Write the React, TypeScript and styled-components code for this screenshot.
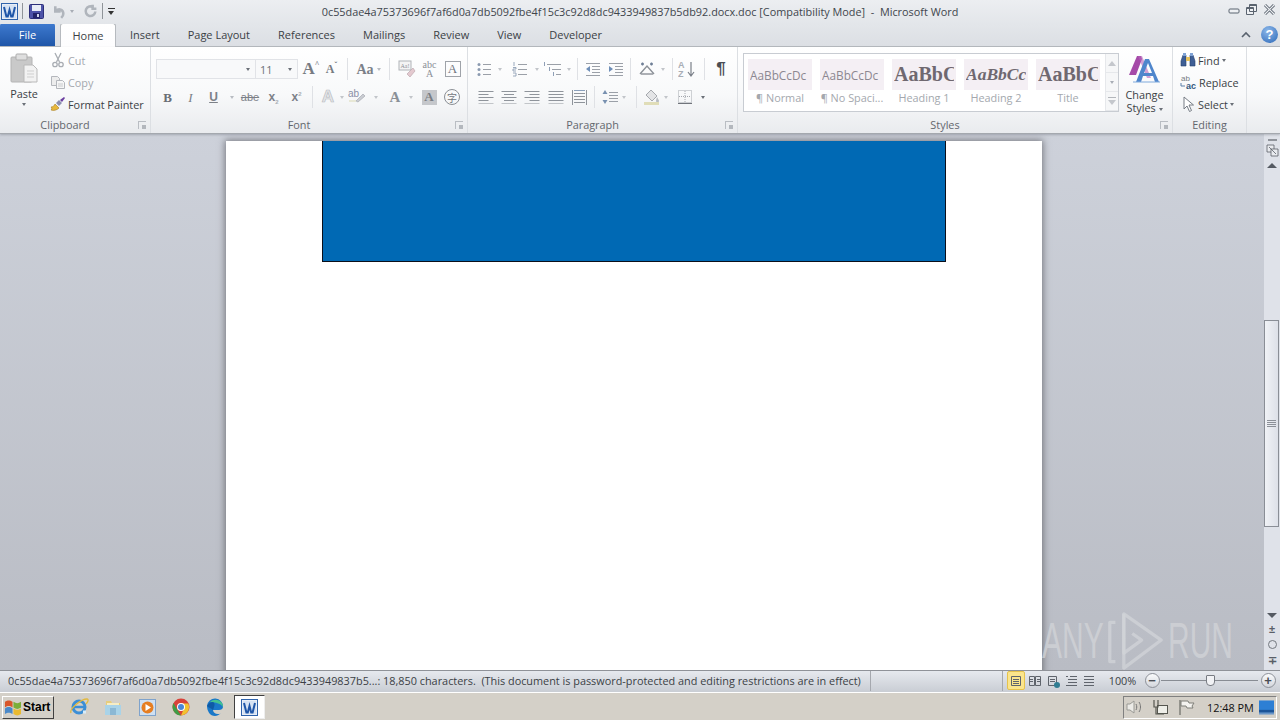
import React from "react";
import styled, { createGlobalStyle } from "styled-components";

const GlobalStyle = createGlobalStyle`
  html, body { margin: 0; padding: 0; height: 100%; overflow: hidden; }
  body { font-family: "Open Sans", "Liberation Sans", sans-serif; font-size: 10.87px; color: #3b3b3b; }
  * { box-sizing: border-box; }
`;

const FILE_NAME = "0c55dae4a75373696f7af6d0a7db5092fbe4f15c3c92d8dc9433949837b5db92.docx.doc";

export default function App() {
  return (
    <Screen>
      <GlobalStyle />
      <TitleBar>
        <QuickAccess>
          <WordIcon size={17} />
          <QatSep />
          <SaveIcon />
          <UndoIcon />
          <QatCaret $c="#a8adb5" />
          <RedoIcon />
          <QatSep />
          <QatMore />
        </QuickAccess>
        <TitleText>{FILE_NAME} [Compatibility Mode]&nbsp; -&nbsp; Microsoft Word</TitleText>
        <WindowButtons>
          <svg width="12" height="12" viewBox="0 0 12 12"><rect x="1" y="5" width="10" height="4" rx="1" fill="#eef0f3" stroke="#5b6470" /></svg>
          <svg width="13" height="13" viewBox="0 0 13 13"><path d="M4.5 1.5h7v7h-7zM1.5 4.5h7v7h-7z" fill="#eef0f3" stroke="#5b6470" /><path d="M1.5 5.5h7M4.5 2.5h7" stroke="#5b6470" /></svg>
          <svg width="13" height="13" viewBox="0 0 13 13"><path d="M2 2l9 9M11 2l-9 9" stroke="#5b6470" strokeWidth="3" /><path d="M2 2l9 9M11 2l-9 9" stroke="#eef0f3" strokeWidth="1.2" /></svg>
        </WindowButtons>
      </TitleBar>

      <TabRow>
        <FileTab>File</FileTab>
        <HomeTab>Home</HomeTab>
        {["Insert", "Page Layout", "References", "Mailings", "Review", "View", "Developer"].map((t) => (
          <Tab key={t}>{t}</Tab>
        ))}
        <TabEnd>
          <svg width="12" height="10" viewBox="0 0 12 10"><path d="M2 7l4-4 4 4" fill="none" stroke="#59626e" strokeWidth="1.6" /></svg>
          <HelpBall>?</HelpBall>
        </TabEnd>
      </TabRow>

      <Ribbon>
        <Group $w={151}>
          <ClipboardBody>
            <BigButton $w={36}>
              <PasteIcon />
              <BigLabel>Paste</BigLabel>
              <MiniCaret />
            </BigButton>
            <SmallCol>
              <SmallRow $off><CutIcon />Cut</SmallRow>
              <SmallRow $off><CopyIcon />Copy</SmallRow>
              <SmallRow><BrushIcon />Format Painter</SmallRow>
            </SmallCol>
          </ClipboardBody>
          <GroupFooter $launcher>Clipboard<Launcher /></GroupFooter>
        </Group>

        <Group $w={317}>
          <ToolBody $left={5}>
            <ToolRow>
              <Combo $w={100}><MiniCaret /></Combo>
              <Combo $w={43}>11<MiniCaret /></Combo>
              <Tool $w={3} />
              <Tool $w={20}><GrowGlyph $size={17}>A<sup>^</sup></GrowGlyph></Tool>
              <Tool $w={21}><GrowGlyph $size={12}>A<sup>ˇ</sup></GrowGlyph></Tool>
              <Divider $l={5} $r={5} />
              <Tool $w={31}><SerifGlyph $size={14} $c="#7b8088" $bold>Aa</SerifGlyph><MiniCaret $c="#b8bcc2" /></Tool>
              <Divider $l={5} $r={5} />
              <Tool $w={23}><ClearIcon /></Tool>
              <Tool $w={23}><SerifGlyph $size={10} $c="#8b9097">abc<br />A</SerifGlyph></Tool>
              <Tool $w={23}><BoxGlyph>A</BoxGlyph></Tool>
            </ToolRow>
            <ToolRow>
              <Tool $w={23}><SerifGlyph $size={13} $c="#6a6e75" $bold>B</SerifGlyph></Tool>
              <Tool $w={23}><SerifGlyph $size={13} $c="#7a7f86" $italic>I</SerifGlyph></Tool>
              <Tool $w={23}><UnderGlyph>U</UnderGlyph></Tool>
              <Tool $w={13}><MiniCaret $c="#b8bcc2" /></Tool>
              <Tool $w={24}><StrikeGlyph>abe</StrikeGlyph></Tool>
              <Tool $w={23}><ScriptGlyph>x<sub>2</sub></ScriptGlyph></Tool>
              <Tool $w={23}><ScriptGlyph>x<sup>2</sup></ScriptGlyph></Tool>
              <Divider $l={4} $r={4} />
              <Tool $w={22}><EffectGlyph>A</EffectGlyph></Tool>
              <Tool $w={6}><MiniCaret $c="#c2c5ca" /></Tool>
              <Tool $w={24}><HighlightIcon /></Tool>
              <Tool $w={14}><MiniCaret $c="#c2c5ca" /></Tool>
              <Tool $w={24}><SerifGlyph $size={15} $c="#8b9097" $bold>A</SerifGlyph></Tool>
              <Tool $w={7}><MiniCaret $c="#c2c5ca" /></Tool>
              <Tool $w={30}><ShadeGlyph>A</ShadeGlyph></Tool>
              <Tool $w={16}><RingGlyph>字</RingGlyph></Tool>
            </ToolRow>
          </ToolBody>
          <GroupFooter $launcher>Font<Launcher /></GroupFooter>
        </Group>

        <Group $w={270}>
          <ToolBody $left={7}>
            <ToolRow>
              <Tool $w={18}><BulletIcon /></Tool>
              <Tool $w={14}><MiniCaret $c="#c2c5ca" /></Tool>
              <Tool $w={26}><NumberIcon /></Tool>
              <Tool $w={8}><MiniCaret $c="#c2c5ca" /></Tool>
              <Tool $w={24}><MultiIcon /></Tool>
              <Tool $w={8}><MiniCaret $c="#c2c5ca" /></Tool>
              <Divider $l={4} $r={4} />
              <Tool $w={22}><IndentIcon $flip /></Tool>
              <Tool $w={24}><IndentIcon /></Tool>
              <Divider $l={2} $r={3} />
              <Tool $w={26}><DirectionIcon /></Tool>
              <Tool $w={6}><MiniCaret $c="#c2c5ca" /></Tool>
              <Divider $l={6} $r={3} />
              <Tool $w={22}><SortIcon /></Tool>
              <Divider $l={6} $r={5} />
              <Tool $w={22}><PilcrowGlyph>¶</PilcrowGlyph></Tool>
            </ToolRow>
            <ToolRow>
              <Tool $w={22}><AlignIcon mode="left" /></Tool>
              <Tool $w={23}><AlignIcon mode="center" /></Tool>
              <Tool $w={24}><AlignIcon mode="right" /></Tool>
              <Tool $w={24}><AlignIcon mode="full" /></Tool>
              <Tool $w={23}><DistributeIcon /></Tool>
              <Divider $l={3} $r={4} />
              <Tool $w={22}><SpacingIcon /></Tool>
              <Tool $w={6}><MiniCaret $c="#c2c5ca" /></Tool>
              <Divider $l={9} $r={5} />
              <Tool $w={20}><BucketIcon /></Tool>
              <Tool $w={8}><MiniCaret $c="#c2c5ca" /></Tool>
              <Tool $w={30}><BorderIcon /></Tool>
              <Tool $w={6}><MiniCaret /></Tool>
            </ToolRow>
          </ToolBody>
          <GroupFooter $launcher>Paragraph<Launcher /></GroupFooter>
        </Group>

        <Group $w={435}>
          <StylesBody>
            <Gallery>
              <StyleItem><StylePreview><PreviewText>AaBbCcDc</PreviewText></StylePreview><StyleName>¶ Normal</StyleName></StyleItem>
              <StyleItem><StylePreview><PreviewText>AaBbCcDc</PreviewText></StylePreview><StyleName>¶ No Spaci...</StyleName></StyleItem>
              <StyleItem><StylePreview><PreviewText $heading>AaBbC</PreviewText></StylePreview><StyleName>Heading 1</StyleName></StyleItem>
              <StyleItem><StylePreview><PreviewText $heading $italic>AaBbCc</PreviewText></StylePreview><StyleName>Heading 2</StyleName></StyleItem>
              <StyleItem><StylePreview><PreviewText $heading>AaBbC</PreviewText></StylePreview><StyleName>Title</StyleName></StyleItem>
              <GalleryScroll>
                <GalleryCell><ArrowUp /></GalleryCell>
                <GalleryCell><MiniCaret $c="#a8adb5" /></GalleryCell>
                <GalleryCell><GalleryMore /></GalleryCell>
              </GalleryScroll>
            </Gallery>
            <ChangeStyles>
              <ChangeStylesIcon />
              <BigLabel>Change<br />Styles <MiniCaret /></BigLabel>
            </ChangeStyles>
          </StylesBody>
          <GroupFooter $launcher>Styles<Launcher /></GroupFooter>
        </Group>

        <Group $w={74}>
          <EditingBody>
            <SmallRow><FindIcon />Find <MiniCaret /></SmallRow>
            <SmallRow><ReplaceIcon />Replace</SmallRow>
            <SmallRow><SelectIcon />Select <MiniCaret /></SmallRow>
          </EditingBody>
          <GroupFooter>Editing</GroupFooter>
        </Group>
      </Ribbon>

      <Workspace>
        <DocArea>
          <Page>
            <BlueBox />
          </Page>
        </DocArea>
        <ScrollBar>
          <ScrollTop>
            <RulerDash />
            <RulerIcon />
            <ScrollArrow $up />
          </ScrollTop>
          <ScrollTrack>
            <Thumb><Grip /><Grip /><Grip /><Grip /></Thumb>
          </ScrollTrack>
          <ScrollBottom>
            <ScrollArrow />
            <NavGlyph>±</NavGlyph>
            <NavCircle />
            <NavGlyph>∓</NavGlyph>
          </ScrollBottom>
        </ScrollBar>
        <Watermark>
          <WaterWord>ANY</WaterWord>
          <svg width="58" height="60" viewBox="0 0 62 64">
            <g fill="none" stroke="#d2d4d8" strokeOpacity=".75" strokeWidth="3.5" strokeLinejoin="round">
              <path d="M9 12H3v42h6" />
              <path d="M18 3l40 28-40 30z" />
              <path d="M18 3v42l19-14-10-7" />
            </g>
          </svg>
          <WaterWord>RUN</WaterWord>
        </Watermark>
      </Workspace>

      <StatusBar>
        <StatusText>0c55dae4a75373696f7af6d0a7db5092fbe4f15c3c92d8dc9433949837b5...: 18,850 characters.&nbsp; (This document is password-protected and editing restrictions are in effect)</StatusText>
        <StatusSep $l={9} />
        <StatusFill />
        <StatusSep $l={0} />
        <ViewButton $active><ViewIcon d="M3.500 3.500h9v9h-9z M5 6.500h6 M5 8.500h6 M5 10.500h6" /></ViewButton>
        <ViewButton><ViewIcon d="M2.500 3.500h5v9h-5z M8.500 3.500h5v9h-5z M3 6.500h3 M3 8.500h3 M10 6.500h3 M10 8.500h3" /></ViewButton>
        <ViewButton><ViewIcon d="M3.500 3.500h8v9h-8z M5 6.500h5 M5 8.500h5" dot /></ViewButton>
        <ViewButton><ViewIcon d="M3 3.500h2 M7 3.500h7 M5 6.500h9 M5 9.500h9 M3 12.500h11" /></ViewButton>
        <ViewButton><ViewIcon d="M3 3.500h10 M3 6.500h10 M3 9.500h10 M3 12.500h10" /></ViewButton>
        <ZoomText>100%</ZoomText>
        <ZoomButton>−</ZoomButton>
        <ZoomTrack><ZoomThumb /></ZoomTrack>
        <ZoomButton>+</ZoomButton>
      </StatusBar>

      <Taskbar>
        <StartButton><FlagIcon />Start</StartButton>
        <TaskIcons>
          <TaskSlot><IeIcon /></TaskSlot>
          <TaskSlot><FolderIcon /></TaskSlot>
          <TaskSlot><PlayerIcon /></TaskSlot>
          <TaskSlot><ChromeIcon /></TaskSlot>
          <TaskSlot><EdgeIcon /></TaskSlot>
          <TaskActive><WordIcon size={17} /></TaskActive>
        </TaskIcons>
        <Tray>
          <SpeakerIcon />
          <NetworkIcon />
          <TrayFlagIcon />
          <Clock>12:48 PM</Clock>
          <DesktopIcon />
        </Tray>
      </Taskbar>
    </Screen>
  );
}

/* ---------- icons ---------- */

function WordIcon({ size }: { size: number }) {
  return (
    <svg width={size} height={size} viewBox="0 0 17 17">
      <rect x=".5" y=".5" width="16" height="16" fill="#e8eef7" stroke="#2f63ab" />
      <rect x="2" y="2" width="13" height="13" fill="#d5e2f3" />
      <path d="M3 4l2.400 9.500h1.400L8.500 7l1.700 6.500h1.400L14 4" fill="none" stroke="#1f56a8" strokeWidth="2" />
    </svg>
  );
}
function SaveIcon() {
  return (
    <svg width="15" height="15" viewBox="0 0 15 15" style={{ marginRight: 7 }}>
      <rect x=".5" y=".5" width="14" height="14" rx="1" fill="#4d53a8" stroke="#2c2f7a" />
      <rect x="3" y="1" width="9" height="6" fill="#e8ecf6" />
      <rect x="4" y="9" width="7" height="5" fill="#23256a" />
      <rect x="8" y="10" width="2" height="3" fill="#cfd4ea" />
    </svg>
  );
}
function UndoIcon() {
  return (
    <svg width="15" height="15" viewBox="0 0 14 14"><path d="M4 2v5h5M4.500 6.500c3-3 7-1 7 2.500 0 2-1 3-2 4" fill="none" stroke="#b0b5bc" strokeWidth="2.400" /></svg>
  );
}
function RedoIcon() {
  return (
    <svg width="15" height="15" viewBox="0 0 14 14"><path d="M11.500 7a4.500 4.500 0 1 1-2-4M9 .8v3.600h3.500" fill="none" stroke="#b0b5bc" strokeWidth="2.400" /></svg>
  );
}
function PasteIcon() {
  return (
    <svg width="28" height="30" viewBox="0 0 28 30">
      <rect x="1" y="4" width="21" height="25" rx="1" fill="#c9c9c9" stroke="#b4b4b4" />
      <rect x="6" y="1" width="11" height="6" rx="1" fill="#dedede" stroke="#adadad" />
      <path d="M14 12h9l4 4v13H14z" fill="#f2f2f2" stroke="#b9b9b9" />
      <path d="M17 18h7M17 21h7M17 24h7" stroke="#cfcfcf" />
    </svg>
  );
}
function CutIcon() {
  return (
    <svg width="16" height="16" viewBox="0 0 16 16" fill="none" stroke="#a9adb3" strokeWidth="1.300">
      <path d="M5 1l4.500 9M11 1L6.500 10" />
      <circle cx="5" cy="12.500" r="2.200" /><circle cx="11" cy="12.500" r="2.200" />
    </svg>
  );
}
function CopyIcon() {
  return (
    <svg width="16" height="16" viewBox="0 0 16 16" fill="#ededed" stroke="#b4b7bc">
      <path d="M1.500 2.500h6l2 2v7h-8z" /><path d="M6.500 6.500h6l2 2v6h-8z" fill="#f6f6f6" />
      <path d="M8 10h5M8 12h5" stroke="#c8cacd" />
    </svg>
  );
}
function BrushIcon() {
  return (
    <svg width="16" height="16" viewBox="0 0 16 16">
      <path d="M1 11c2 0 3-1 4-3l4 4c-2 2-5 3-8 2 1-1 1-2 0-3z" fill="#e8b83c" stroke="#a57b1c" strokeWidth=".6" />
      <path d="M6 7l3-3 3 3-3 3z" fill="#8b8fb0" />
      <path d="M10 4l4-3 1 1-3 4z" fill="#6b3fa0" />
    </svg>
  );
}
function ClearIcon() {
  return (
    <svg width="18" height="18" viewBox="0 0 18 18">
      <rect x="1" y="1" width="12" height="9" fill="#f4f4f4" stroke="#b0b3b8" />
      <text x="2.500" y="8" fontSize="6" fontFamily="Liberation Serif" fill="#8b8f95">Aa!</text>
      <path d="M9 14l6-6 2 3-5 6z" fill="#e4c9cf" stroke="#b6a0a6" strokeWidth=".6" />
    </svg>
  );
}
function HighlightIcon() {
  return (
    <svg width="18" height="18" viewBox="0 0 18 18">
      <text x="0" y="9" fontSize="10" fontFamily="Liberation Sans" fill="#8a8fa6">ab</text>
      <path d="M8 13l7-7 2 2-7 6z" fill="#c9ccd2" stroke="#a8abb2" strokeWidth=".7" />
      <path d="M1 12h7v2H1z" fill="#e8e8d6" />
    </svg>
  );
}
function BulletIcon() {
  return (
    <svg width="16" height="16" viewBox="0 0 16 16">
      <path d="M7 3.500h8M7 8.500h8M7 13.500h8" stroke="#9ba0a8" />
      <circle cx="3" cy="3.500" r="1.500" fill="#8b9ab0" /><circle cx="3" cy="8.500" r="1.500" fill="#8b9ab0" /><circle cx="3" cy="13.500" r="1.500" fill="#8b9ab0" />
    </svg>
  );
}
function NumberIcon() {
  return (
    <svg width="16" height="16" viewBox="0 0 16 16">
      <path d="M6 3.500h9M6 8.500h9M6 13.500h9" stroke="#9ba0a8" />
      <path d="M2 1v4M1 6.500h3v1.500H1v2h3M1 12h3v3H1" fill="none" stroke="#8f9fb6" strokeWidth=".9" />
    </svg>
  );
}
function MultiIcon() {
  return (
    <svg width="20" height="16" viewBox="0 0 20 16">
      <path d="M4 3.500h14M9 8.500h9M13 13.500h5" stroke="#9ba0a8" />
      <path d="M1.500 1v4M6.500 6v4M10.500 11v4" stroke="#8f9fb6" />
    </svg>
  );
}
function IndentIcon({ $flip }: { $flip?: boolean }) {
  return (
    <svg width="16" height="16" viewBox="0 0 16 16">
      <path d="M1 2.500h14M7 5.500h8M7 8.500h8M7 11.500h8M1 14.500h14" stroke="#9ba0a8" />
      <path d={$flip ? "M5 5L1 8l4 3z" : "M1 5l4 3-4 3z"} fill="#6f8fb8" />
    </svg>
  );
}
function DirectionIcon() {
  return (
    <svg width="18" height="16" viewBox="0 0 18 16" fill="none" stroke="#8b9097" strokeWidth="1.400">
      <path d="M2 13L9 5l7 8" /><path d="M3 13h12" />
      <path d="M3 3h3M4.500 1.500v3M12 3h3M13.500 1.500v3" stroke="#6f7f96" />
    </svg>
  );
}
function SortIcon() {
  return (
    <svg width="18" height="18" viewBox="0 0 18 18">
      <text x="0" y="8" fontSize="9" fontFamily="Liberation Sans" fill="#a8adb5" fontWeight="700">A</text>
      <text x="0" y="17" fontSize="9" fontFamily="Liberation Sans" fill="#a8adb5" fontWeight="700">Z</text>
      <path d="M13 2v13M10 12l3 4 3-4" fill="none" stroke="#7b8089" strokeWidth="1.200" />
    </svg>
  );
}
function AlignIcon({ mode }: { mode: "left" | "center" | "right" | "full" }) {
  const short = mode === "full" ? 15 : 10;
  const x = mode === "left" || mode === "full" ? 0.5 : mode === "right" ? 5.5 : 3;
  return (
    <svg width="16" height="14" viewBox="0 0 16 14" stroke="#8f949b">
      <path d="M.5 1.500h15" /><path d={`M${x} 4.500h${short}`} /><path d="M.5 7.500h15" /><path d={`M${x} 10.500h${short}`} />
      <path d="M.5 13.500h15" strokeOpacity=".5" />
    </svg>
  );
}
function DistributeIcon() {
  return (
    <svg width="17" height="17" viewBox="0 0 17 17" fill="none" stroke="#8f949b">
      <path d="M1.500 1v15M15.500 1v15M3 4.500h11M3 7.500h11M3 10.500h11M3 13.500h11" />
      <path d="M3 1.500h11" stroke="#8aa0bc" />
    </svg>
  );
}
function SpacingIcon() {
  return (
    <svg width="16" height="16" viewBox="0 0 16 16">
      <path d="M7 3.500h9M7 6.500h9M7 9.500h9M7 12.500h9" stroke="#9ba0a8" />
      <path d="M3 1L.5 5h5zM3 15L.5 11h5z" fill="#7890b0" />
    </svg>
  );
}
function BucketIcon() {
  return (
    <svg width="18" height="18" viewBox="0 0 18 18">
      <path d="M8 2l6 6-5 5-6-6z" fill="#e3e4e6" stroke="#a6a9ae" />
      <path d="M14 9c1 2 2 3 2 4a1.500 1.500 0 0 1-3 0c0-1 .5-2 1-4z" fill="#b8bcc2" />
      <rect x="1" y="14" width="15" height="3" fill="#e0ddb8" />
    </svg>
  );
}
function BorderIcon() {
  return (
    <svg width="14" height="14" viewBox="0 0 14 14" fill="none" stroke="#a4a8ae" strokeDasharray="1 1">
      <rect x=".5" y=".5" width="13" height="12" /><path d="M7 1v11M1 6.500h12" />
      <path d="M0 13.500h14" stroke="#70747b" strokeDasharray="none" />
    </svg>
  );
}
function ArrowUp() {
  return <svg width="8" height="5" viewBox="0 0 8 5"><path d="M4 0L0 5h8z" fill="#c4c7cc" /></svg>;
}
function GalleryMore() {
  return <svg width="8" height="8" viewBox="0 0 8 8"><path d="M0 0h8v1H0z" fill="#b3b6bb" /><path d="M0 3h8L4 8z" fill="#c4c7cc" /></svg>;
}
function ChangeStylesIcon() {
  return (
    <svg width="32" height="28" viewBox="0 0 32 28">
      <path d="M0 20L8 1h4l1 3-6 16z" fill="#a54aa8" />
      <path d="M9 1h4l9 22h-4z" fill="#b565ba" opacity=".6" />
      <path d="M7 27L16 4h4l10 23h-4l-2-6H14l-2 6z M15 18h8l-4-10z" fill="#4f86cc" fillRule="evenodd" />
      <path d="M4 27h27" stroke="#7fa9dc" />
    </svg>
  );
}
function FindIcon() {
  return (
    <svg width="16" height="16" viewBox="0 0 16 16">
      <path d="M1 9l2-6h3v11H1zM15 9l-2-6h-3v11h5z" fill="#3f5f95" stroke="#27406d" strokeWidth=".6" />
      <rect x="6" y="5" width="4" height="4" fill="#e7c25d" />
      <rect x="3" y="1" width="3" height="3" fill="#7ea1d4" /><rect x="10" y="1" width="3" height="3" fill="#7ea1d4" />
    </svg>
  );
}
function ReplaceIcon() {
  return (
    <svg width="17" height="16" viewBox="0 0 17 16">
      <text x="1" y="7" fontSize="8" fontFamily="Liberation Sans" fill="#777b82">ab</text>
      <text x="6" y="15" fontSize="9" fontWeight="700" fontFamily="Liberation Sans" fill="#33597f">ac</text>
      <path d="M1 9v3h4" fill="none" stroke="#5a7fa8" />
    </svg>
  );
}
function SelectIcon() {
  return (
    <svg width="16" height="17" viewBox="0 0 16 17">
      <path d="M4 1v12l3-3 2.500 5.500 2-1L9 9h4.500z" fill="#fff" stroke="#767c85" />
    </svg>
  );
}
function RulerIcon() {
  return (
    <svg width="13" height="13" viewBox="0 0 13 13" fill="#e9ebef" stroke="#5a5f68" strokeWidth=".8">
      <path d="M1 1h7v7H1z" /><path d="M5 5h7v7H5z" /><path d="M3 3l7 7" />
    </svg>
  );
}
function ViewIcon({ d, dot }: { d: string; dot?: boolean }) {
  return (
    <svg width="16" height="16" viewBox="0 0 16 16">
      <path d={d} fill="none" stroke="#5f646c" />
      {dot && <circle cx="12" cy="12" r="3" fill="#2f7c92" />}
    </svg>
  );
}
function FlagIcon() {
  return (
    <svg width="18" height="17" viewBox="0 0 19 18">
      <path d="M1 3c3-2 5-2 8 0v6c-3-2-5-2-8 0z" fill="#d8562a" />
      <path d="M10 3c3 2 5 2 8 0v6c-3 2-5 2-8 0z" fill="#7bae3a" />
      <path d="M1 10c3-2 5-2 8 0v6c-3-2-5-2-8 0z" fill="#4a89c9" />
      <path d="M10 10c3 2 5 2 8 0v6c-3 2-5 2-8 0z" fill="#e9b92f" />
    </svg>
  );
}
function IeIcon() {
  return (
    <svg width="20" height="20" viewBox="0 0 20 20">
      <circle cx="10" cy="10" r="6" fill="none" stroke="#3c8fd6" strokeWidth="3" />
      <path d="M4 10h12" stroke="#3c8fd6" strokeWidth="2.500" />
      <path d="M14 15h3" stroke="#d8ecf8" strokeWidth="3" />
      <path d="M2 16C0 12 12 2 18 2c2 0 1 3-1 5" fill="none" stroke="#e2b93f" strokeWidth="1.300" />
    </svg>
  );
}
function FolderIcon() {
  return (
    <svg width="18" height="18" viewBox="0 0 18 18">
      <path d="M2 3h5l1 2h8v11H2z" fill="#e7cd7b" />
      <path d="M1 7h16v10H1z" fill="#a9d3e8" />
      <rect x="6" y="10" width="6" height="7" fill="#8bb8d4" />
      <path d="M3 5h12v2H3z" fill="#f7edc4" />
    </svg>
  );
}
function PlayerIcon() {
  return (
    <svg width="17" height="17" viewBox="0 0 17 17">
      <rect x=".5" y=".5" width="16" height="16" fill="#cfe0f2" stroke="#7fa3cc" />
      <circle cx="8.500" cy="8.500" r="6" fill="#e67e22" />
      <path d="M6.500 5l5.500 3.500L6.500 12z" fill="#fff" />
    </svg>
  );
}
function ChromeIcon() {
  return (
    <svg width="18" height="18" viewBox="0 0 18 18">
      <circle cx="9" cy="9" r="8.500" fill="#d8423a" />
      <path d="M1.500 5L6 13l3 4.500A8.500 8.500 0 0 1 1.500 5z" fill="#3f9c46" />
      <path d="M9 5.500h7.300A8.500 8.500 0 0 1 9 17.500l3-7z" fill="#f2c230" />
      <circle cx="9" cy="9" r="4" fill="#fff" /><circle cx="9" cy="9" r="3" fill="#4a86d8" />
    </svg>
  );
}
function EdgeIcon() {
  return (
    <svg width="18" height="18" viewBox="0 0 18 18">
      <path d="M1 8a8 8 0 0 1 16 1c0 2-2 3-4 3H7c0 2 2 4 5 4 1 0 2 0 3-1-2 2-4 3-6 3C4 18 1 13 1 8z" fill="#1a78c8" />
      <path d="M4 4c3-3 9-3 12 1 1 2 1 4 1 4-2-4-10-5-13-5z" fill="#43c28f" />
      <path d="M1 8c1-3 4-4 6-4 2 1 2 3 0 8-2-2-4-2-6-4z" fill="#0f5aa5" />
    </svg>
  );
}
function SpeakerIcon() {
  return (
    <svg width="18" height="16" viewBox="0 0 18 16" fill="none" stroke="#9a9a95" style={{ marginRight: 8 }}>
      <path d="M1 5h3l4-3v12l-4-3H1z" fill="#ecebe7" />
      <path d="M10 5c1 2 1 4 0 6M13 3c2 3 2 7 0 10" stroke="#777" />
    </svg>
  );
}
function NetworkIcon() {
  return (
    <svg width="17" height="17" viewBox="0 0 17 17" style={{ marginRight: 9 }}>
      <rect x="5.500" y="6.500" width="10" height="8" fill="#eeeee8" stroke="#55564f" />
      <path d="M2 1v7h4V1M4 8v7h8" fill="none" stroke="#55564f" strokeWidth="1.200" />
    </svg>
  );
}
function TrayFlagIcon() {
  return (
    <svg width="17" height="17" viewBox="0 0 17 17" fill="#f4f3ef" stroke="#7f7f79">
      <path d="M2 1v15" strokeWidth="1.500" /><path d="M3 2h7l1 2h5l-2 3 1 2H9L8 7H3z" />
    </svg>
  );
}
function DesktopIcon() {
  return (
    <svg width="15" height="15" viewBox="0 0 16 15">
      <rect width="16" height="13" fill="#2d7fd4" />
      <rect y="10" width="16" height="3" fill="#1c5498" />
      <rect y="13" width="16" height="2" fill="#6a96c8" />
    </svg>
  );
}

/* ---------- layout ---------- */

const Screen = styled.div`
  width: 1280px;
  height: 720px;
  display: flex;
  flex-direction: column;
  overflow: hidden;
  background: #d4d0c8;
`;

const TitleBar = styled.div`
  height: 24px;
  padding-bottom: 2px;
  position: relative;
  display: flex;
  align-items: center;
  justify-content: space-between;
  background: linear-gradient(#eceef1, #e3e6ea);
`;

const QuickAccess = styled.div`
  display: flex;
  align-items: center;
  padding-left: 1px;
`;

const QatSep = styled.span`
  width: 1px;
  height: 16px;
  margin: 0 6px 0 4px;
  background: #8f9499;
`;

const MiniCaret = styled.i<{ $c?: string }>`
  display: inline-block;
  flex: none;
  width: 0;
  height: 0;
  border: 2.5px solid transparent;
  border-top: 3px solid ${(p) => p.$c || "#6b7078"};
  border-bottom: 0;
  vertical-align: middle;
`;

const QatCaret = styled(MiniCaret)`
  margin: 0 9px 0 4px;
`;

const QatMore = styled.span`
  width: 7px;
  height: 7px;
  border-top: 1px solid #333;
  position: relative;
  margin-left: -1px;
  &::after {
    content: "";
    position: absolute;
    top: 2px;
    left: 0;
    border: 3.5px solid transparent;
    border-top: 4px solid #333;
    border-bottom: 0;
  }
`;

const TitleText = styled.div`
  position: absolute;
  left: 0;
  right: 0;
  text-align: center;
  font-size: 10.87px;
  color: #40454c;
  white-space: nowrap;
  pointer-events: none;
`;

const WindowButtons = styled.div`
  align-self: flex-start;
  display: flex;
  align-items: center;
  gap: 5px;
  padding: 3px 4px 0 0;
`;

const TabRow = styled.div`
  height: 23px;
  display: flex;
  align-items: flex-end;
  font-size: 11px;
  background: linear-gradient(#e3e6ea, #dcdfe4);
  border-bottom: 1px solid #b6babf;
`;

const FileTab = styled.div`
  width: 55px;
  height: 23px;
  margin-right: 5px;
  display: flex;
  align-items: center;
  justify-content: center;
  color: #fff;
  background: linear-gradient(#3f7bd0, #1f56a8);
  border-radius: 3px 3px 0 0;
`;

const HomeTab = styled.div`
  width: 56px;
  height: 24px;
  margin-bottom: -1px;
  display: flex;
  align-items: center;
  justify-content: center;
  color: #3b3f45;
  background: linear-gradient(#fff, #fdfdfe);
  border: 1px solid #b6babf;
  border-bottom: 0;
  border-radius: 3px 3px 0 0;
`;

const Tab = styled.div`
  height: 23px;
  padding: 0 14px;
  display: flex;
  align-items: center;
  color: #3b3f45;
`;

const TabEnd = styled.div`
  margin-left: auto;
  height: 23px;
  display: flex;
  align-items: center;
  gap: 9px;
  padding-right: 2px;
`;

const HelpBall = styled.span`
  width: 17px;
  height: 17px;
  border-radius: 50%;
  display: flex;
  align-items: center;
  justify-content: center;
  color: #fff;
  font: 700 13px "Liberation Sans", sans-serif;
  background: radial-gradient(circle at 40% 30%, #8db8ea, #2c68b8);
`;

const Ribbon = styled.div`
  height: 87px;
  display: flex;
  background: linear-gradient(#fff 0%, #f8f9fa 55%, #e9ebee 100%);
  border-bottom: 1px solid #a4a8ae;
  box-shadow: 0 1px 2px rgba(90, 95, 105, 0.35);
  position: relative;
  z-index: 2;
`;

const Group = styled.section<{ $w: number }>`
  width: ${(p) => p.$w}px;
  height: 86px;
  display: flex;
  flex-direction: column;
  border-right: 1px solid #dcdfe3;
`;

const GroupFooter = styled.div<{ $launcher?: boolean }>`
  height: 15px;
  margin-bottom: 1px;
  padding-right: ${(p) => (p.$launcher ? 20 : 0)}px;
  position: relative;
  display: flex;
  align-items: center;
  justify-content: center;
  color: #63676e;
`;

const Launcher = styled.span`
  position: absolute;
  right: 4px;
  top: 4px;
  width: 8px;
  height: 8px;
  border: 1px solid #b9bdc3;
  border-width: 1px 0 0 1px;
  &::after {
    content: "";
    position: absolute;
    right: 0;
    bottom: 0;
    width: 4px;
    height: 4px;
    background: #b3b7bd;
  }
`;

const ClipboardBody = styled.div`
  flex: 1;
  display: flex;
  padding: 2px 0 0 6px;
`;

const BigButton = styled.div<{ $w: number }>`
  width: ${(p) => p.$w}px;
  padding-top: 4px;
  display: flex;
  flex-direction: column;
  align-items: center;
`;

const BigLabel = styled.div`
  margin: 4px 0 3px;
  line-height: 13px;
  text-align: center;
  color: #3b3f45;
`;

const SmallCol = styled.div`
  margin-left: 8px;
  display: flex;
  flex-direction: column;
`;

const SmallRow = styled.div<{ $off?: boolean }>`
  height: 22px;
  display: flex;
  align-items: center;
  gap: 2px;
  white-space: nowrap;
  color: ${(p) => (p.$off ? "#a4a8ae" : "#3b3f45")};
`;

const ToolBody = styled.div<{ $left: number }>`
  flex: 1;
  padding: 12px 0 0 ${(p) => p.$left}px;
  display: flex;
  flex-direction: column;
  gap: 8px;
`;

const ToolRow = styled.div`
  height: 20px;
  display: flex;
  align-items: center;
`;

const Tool = styled.span<{ $w: number }>`
  width: ${(p) => p.$w}px;
  flex: none;
  height: 20px;
  display: flex;
  align-items: center;
  justify-content: center;
  gap: 3px;
`;

const Combo = styled.div<{ $w: number }>`
  width: ${(p) => p.$w}px;
  height: 20px;
  padding: 0 5px 0 4px;
  margin-right: -1px;
  display: flex;
  align-items: center;
  justify-content: flex-end;
  color: #6b7078;
  background: #f8f9fa;
  border: 1px solid #e1e3e7;
  &:nth-child(2) {
    justify-content: space-between;
    margin-right: 0;
  }
`;

const Divider = styled.span<{ $l: number; $r: number }>`
  width: 1px;
  flex: none;
  height: 22px;
  margin: 0 ${(p) => p.$r}px 0 ${(p) => p.$l}px;
  background: #dfe1e5;
`;

const GrowGlyph = styled.span<{ $size: number }>`
  font: 700 ${(p) => p.$size}px "Liberation Serif", serif;
  color: #777b82;
  & > sup {
    font-size: 8px;
    line-height: 0;
  }
`;

const SerifGlyph = styled.span<{ $size: number; $c: string; $bold?: boolean; $italic?: boolean }>`
  font-family: "Liberation Serif", serif;
  font-size: ${(p) => p.$size}px;
  line-height: 9px;
  text-align: center;
  font-weight: ${(p) => (p.$bold ? 700 : 400)};
  font-style: ${(p) => (p.$italic ? "italic" : "normal")};
  color: ${(p) => p.$c};
`;

const BoxGlyph = styled.span`
  width: 16px;
  height: 16px;
  display: flex;
  align-items: center;
  justify-content: center;
  border: 1px solid #9fa3a9;
  font: 13px "Liberation Serif", serif;
  color: #72767d;
`;

const UnderGlyph = styled.span`
  font: 700 12px "Liberation Sans", sans-serif;
  color: #7d8188;
  text-decoration: underline;
`;

const StrikeGlyph = styled.span`
  font: 11px "Liberation Sans", sans-serif;
  color: #7d8188;
  text-decoration: line-through;
`;

const ScriptGlyph = styled.span`
  font: 700 12px "Liberation Sans", sans-serif;
  color: #7d8188;
  & > sub, & > sup {
    font-size: 6px;
    line-height: 0;
    color: #a8adb5;
  }
`;

const EffectGlyph = styled.span`
  font: 700 17px "Liberation Sans", sans-serif;
  color: #e5e6e8;
  -webkit-text-stroke: 0.7px #b9bcc2;
`;

const ShadeGlyph = styled.span`
  width: 15px;
  height: 15px;
  display: flex;
  align-items: center;
  justify-content: center;
  background: #c5c7cb;
  font: 700 13px "Liberation Serif", serif;
  color: #797d84;
`;

const RingGlyph = styled.span`
  width: 16px;
  height: 16px;
  display: flex;
  align-items: center;
  justify-content: center;
  border: 1px solid #8b8f95;
  border-radius: 50%;
  font: 10px "Noto Sans CJK SC", sans-serif;
  color: #72767d;
`;

const PilcrowGlyph = styled.span`
  font: 700 17px "Liberation Sans", sans-serif;
  color: #4a4e55;
`;

const StylesBody = styled.div`
  flex: 1;
  display: flex;
  padding: 6px 0 0 5px;
`;

const Gallery = styled.div`
  width: 376px;
  height: 59px;
  padding: 5px 0 0 4px;
  display: flex;
  gap: 8px;
  background: #fff;
  border: 1px solid #c8ccd2;
`;

const StyleItem = styled.div`
  width: 64px;
  flex: none;
  display: flex;
  flex-direction: column;
  align-items: center;
`;

const StylePreview = styled.div`
  width: 64px;
  height: 31px;
  padding: 0 2px;
  display: flex;
  align-items: center;
  background: #f4eff4;
`;

const PreviewText = styled.span<{ $heading?: boolean; $italic?: boolean }>`
  width: 60px;
  overflow: hidden;
  white-space: nowrap;
  color: ${(p) => (p.$heading ? "#6f6870" : "#8c8791")};
  font-family: ${(p) => (p.$heading ? '"Liberation Serif", serif' : '"Open Sans", sans-serif')};
  font-size: ${(p) => (p.$heading ? (p.$italic ? 17.5 : 20) : 11.8)}px;
  font-weight: ${(p) => (p.$heading ? 700 : 400)};
  font-style: ${(p) => (p.$italic ? "italic" : "normal")};
`;

const StyleName = styled.div`
  margin-top: 1px;
  line-height: 14px;
  color: #a4a8ae;
  white-space: nowrap;
`;

const GalleryScroll = styled.div`
  margin: -5px 0 0 -3px;
  width: 14px;
  height: 57px;
  display: flex;
  flex-direction: column;
  background: #f6f7f8;
  border-left: 1px solid #e6e8eb;
`;

const GalleryCell = styled.div`
  flex: 1;
  display: flex;
  align-items: center;
  justify-content: center;
  border-bottom: 1px solid #e6e8eb;
`;

const ChangeStyles = styled.div`
  width: 47px;
  margin-left: 2px;
  padding-top: 2px;
  display: flex;
  flex-direction: column;
  align-items: center;
  & > div {
    margin-top: 5px;
  }
`;

const EditingBody = styled.div`
  flex: 1;
  padding: 2px 0 0 7px;
  display: flex;
  flex-direction: column;
`;

const Workspace = styled.div`
  flex: 1;
  min-height: 0;
  position: relative;
  display: flex;
`;

const DocArea = styled.div`
  flex: 1;
  padding: 7px 0 0 226px;
  overflow: hidden;
  background: linear-gradient(#cdd1da, #b9bcc4);
`;

const Page = styled.div`
  width: 816px;
  height: 700px;
  padding-left: 96px;
  background: #fff;
  box-shadow: 0 0 7px 1px rgba(60, 60, 66, 0.6);
`;

const BlueBox = styled.div`
  width: 624px;
  height: 121px;
  background: #0069b4;
  border: 1px solid #0b0f1a;
  border-top: 0;
`;

const ScrollBar = styled.div`
  width: 16px;
  display: flex;
  flex-direction: column;
  background: #dfe2e9;
`;

const ScrollTop = styled.div`
  height: 39px;
  display: flex;
  flex-direction: column;
  align-items: center;
  padding-top: 5px;
  gap: 3px;
`;

const RulerDash = styled.span`
  width: 9px;
  height: 2px;
  background: #90949b;
`;

const ScrollArrow = styled.span<{ $up?: boolean }>`
  margin-top: 3px;
  width: 0;
  height: 0;
  border: 5px solid transparent;
  ${(p) => (p.$up ? "border-bottom: 5px solid #555a62; border-top: 0;" : "border-top: 5px solid #555a62; border-bottom: 0;")}
`;

const ScrollTrack = styled.div`
  flex: 1;
  padding-top: 147px;
`;

const Thumb = styled.div`
  width: 15px;
  height: 207px;
  display: flex;
  flex-direction: column;
  align-items: center;
  justify-content: center;
  gap: 1px;
  background: linear-gradient(90deg, #f0f2f6, #dde0e8);
  border: 1px solid #8a8e96;
`;

const Grip = styled.span`
  width: 9px;
  height: 1px;
  background: #8c9098;
`;

const ScrollBottom = styled.div`
  height: 60px;
  display: flex;
  flex-direction: column;
  align-items: center;
  justify-content: space-between;
  padding-bottom: 3px;
`;

const NavGlyph = styled.span`
  font: 700 11px/13px "Liberation Sans", sans-serif;
  color: #5a5f68;
`;

const NavCircle = styled.span`
  width: 9px;
  height: 9px;
  border: 1.5px solid #73787f;
  border-radius: 50%;
`;

const Watermark = styled.div`
  position: absolute;
  left: 1042px;
  top: 475px;
  height: 64px;
  display: flex;
  align-items: center;
  gap: 3px;
  pointer-events: none;
`;

const WaterWord = styled.span`
  width: 62px;
  display: inline-block;
  font: 50px/64px "Liberation Sans", sans-serif;
  color: rgba(210, 212, 216, 0.75);
  transform: scaleX(0.6);
  transform-origin: left center;
  white-space: nowrap;
`;

const StatusBar = styled.div`
  height: 23px;
  flex: none;
  display: flex;
  align-items: center;
  padding: 0 4.5px 2px 8px;
  position: relative;
  z-index: 2;
  background: linear-gradient(#e6e9ee, #c9cdd4);
  border-top: 1px solid #8f9298;
  border-bottom: 1px solid #fff;
`;

const StatusText = styled.div`
  color: #3b3f45;
  white-space: nowrap;
`;

const StatusSep = styled.span<{ $l: number }>`
  width: 1px;
  height: 20px;
  margin-left: ${(p) => p.$l}px;
  background: #a5a8ae;
`;

const StatusFill = styled.span`
  flex: 1;
`;

const ViewButton = styled.span<{ $active?: boolean }>`
  width: 18px;
  height: 19px;
  display: flex;
  align-items: center;
  justify-content: center;
  border-radius: 2px;
  ${(p) => (p.$active ? "background: #fbe58c; border: 1px solid #e6c34d; margin: 0 1px 0 4px;" : "")}
`;

const ZoomText = styled.span`
  width: 38px;
  margin-left: 6px;
  text-align: center;
  color: #3b3f45;
`;

const ZoomButton = styled.span`
  width: 15px;
  height: 15px;
  margin-left: 3px;
  display: flex;
  align-items: center;
  justify-content: center;
  border-radius: 50%;
  border: 1px solid #8c9098;
  background: linear-gradient(#fafbfc, #d3d6dc);
  font: 700 13px/13px "Liberation Sans", sans-serif;
  color: #4a4e55;
`;

const ZoomTrack = styled.span`
  width: 97px;
  height: 1px;
  margin-left: 1px;
  position: relative;
  background: #888c93;
`;

const ZoomThumb = styled.span`
  position: absolute;
  left: 45px;
  top: -5px;
  width: 9px;
  height: 11px;
  border: 1px solid #777b82;
  border-radius: 1px 1px 4px 4px;
  background: #f1f2f5;
`;

const Taskbar = styled.div`
  height: 27px;
  flex: none;
  display: flex;
  align-items: center;
  padding: 1px 3px 0 2px;
  background: #d4d0c8;
`;

const StartButton = styled.div`
  width: 52px;
  height: 23px;
  display: flex;
  align-items: center;
  gap: 1px;
  padding-left: 1px;
  font: 700 12px "Liberation Sans", sans-serif;
  color: #000;
  background: #d4d0c8;
  border: 1px solid;
  border-color: #fff #404040 #404040 #fff;
`;

const TaskIcons = styled.div`
  display: flex;
  align-items: center;
  margin-left: 8px;
`;

const TaskSlot = styled.span`
  width: 34px;
  height: 24px;
  display: flex;
  align-items: center;
  justify-content: center;
`;

const TaskActive = styled.span`
  width: 31px;
  height: 24px;
  margin-left: 2px;
  display: flex;
  align-items: center;
  justify-content: center;
  background: #fff;
  border: 1px solid;
  border-color: #404040 #eee #eee #404040;
`;

const Tray = styled.div`
  width: 154px;
  height: 23px;
  margin-left: auto;
  padding: 0 2px 0 2px;
  display: flex;
  align-items: center;
  border: 1px solid;
  border-color: #808080 #fff #fff #808080;
`;

const Clock = styled.span`
  color: #111;
  margin: 0 auto 0 12px;
  white-space: nowrap;
`;
